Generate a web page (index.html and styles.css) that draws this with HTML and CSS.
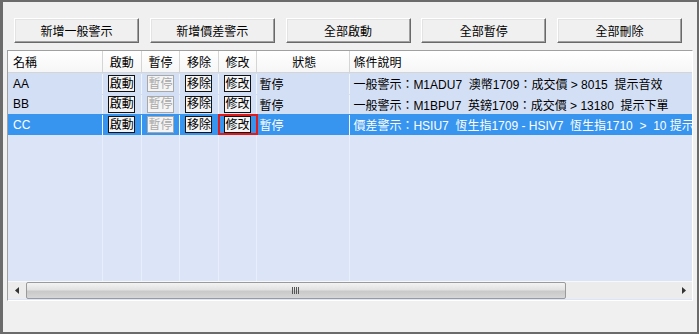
FILE: index.html
```html
<!DOCTYPE html>
<html>
<head>
<meta charset="utf-8">
<link rel="stylesheet" href="styles.css">
</head>
<body>
<div class="window">
  <div class="toolbar">
    <button class="btn">新增一般警示</button>
    <button class="btn">新增價差警示</button>
    <button class="btn">全部啟動</button>
    <button class="btn">全部暫停</button>
    <button class="btn">全部刪除</button>
  </div>
  <div class="list">
    <div class="row head">
      <div class="c c-name">名稱</div>
      <div class="c c-b ctr">啟動</div>
      <div class="c c-b ctr">暫停</div>
      <div class="c c-b ctr">移除</div>
      <div class="c c-b ctr">修改</div>
      <div class="c c-st ctr">狀態</div>
      <div class="c c-desc">條件說明</div>
    </div>
    <div class="row item">
      <div class="c c-name">AA</div>
      <div class="c c-b ctr"><span class="cb">啟動</span></div>
      <div class="c c-b ctr"><span class="cb off">暫停</span></div>
      <div class="c c-b ctr"><span class="cb">移除</span></div>
      <div class="c c-b ctr"><span class="cb">修改</span></div>
      <div class="c c-st">暫停</div>
      <div class="c c-desc">一般警示：M1ADU7&nbsp; 澳幣1709：成交價 &gt; 8015&nbsp; 提示音效</div>
    </div>
    <div class="row item">
      <div class="c c-name">BB</div>
      <div class="c c-b ctr"><span class="cb">啟動</span></div>
      <div class="c c-b ctr"><span class="cb off">暫停</span></div>
      <div class="c c-b ctr"><span class="cb">移除</span></div>
      <div class="c c-b ctr"><span class="cb">修改</span></div>
      <div class="c c-st">暫停</div>
      <div class="c c-desc">一般警示：M1BPU7&nbsp; 英鎊1709：成交價 &gt; 13180&nbsp; 提示下單</div>
    </div>
    <div class="row item sel">
      <div class="c c-name">CC</div>
      <div class="c c-b ctr"><span class="cb">啟動</span></div>
      <div class="c c-b ctr"><span class="cb off">暫停</span></div>
      <div class="c c-b ctr"><span class="cb">移除</span></div>
      <div class="c c-b ctr mark"><span class="cb">修改</span><span class="redbox"></span></div>
      <div class="c c-st">暫停</div>
      <div class="c c-desc">價差警示：HSIU7&nbsp; 恆生指1709 - HSIV7&nbsp; 恆生指1710&nbsp; &gt;&nbsp; 10 提示音效</div>
    </div>
    <div class="row empty">
      <div class="c c-name"></div>
      <div class="c c-b"></div>
      <div class="c c-b"></div>
      <div class="c c-b"></div>
      <div class="c c-b"></div>
      <div class="c c-st"></div>
      <div class="c c-desc"></div>
    </div>
    <div class="hscroll">
      <div class="arrow">
        <svg width="5" height="7" viewBox="0 0 5 7"><path d="M4 0 L0 3.5 L4 7 Z" fill="#333"/></svg>
      </div>
      <div class="thumb">
        <svg width="9" height="7" viewBox="0 0 9 7"><g fill="#555"><rect x="0" y="0" width="1" height="7"/><rect x="2" y="0" width="1" height="7"/><rect x="4" y="0" width="1" height="7"/><rect x="6" y="0" width="1" height="7"/></g></svg>
      </div>
      <div class="track"></div>
      <div class="arrow">
        <svg width="5" height="7" viewBox="0 0 5 7"><path d="M1 0 L5 3.5 L1 7 Z" fill="#333"/></svg>
      </div>
    </div>
  </div>
</div>
</body>
</html>
```
FILE: styles.css
```css
html, body {
  margin: 0;
  padding: 0;
  background: #f0f0f0;
}
.window {
  width: 699px;
  height: 334px;
  box-sizing: border-box;
  border: 2px solid #6b6b6b;
  border-left-width: 3px;
  background: #f0f0f0;
  display: flex;
  flex-direction: column;
  font-family: "Liberation Sans", "Noto Sans CJK TC", sans-serif;
  font-size: 12px;
  color: #000;
}
.toolbar {
  display: flex;
  gap: 10.75px;
  padding: 16px 0 0 11px;
  height: 25px;
}
.btn {
  width: 125px;
  height: 25px;
  margin: 0;
  padding: 0;
  background: #f0f0f0;
  border: 1px solid;
  border-color: #ffffff #696969 #696969 #ffffff;
  box-shadow: inset -1px -1px 0 #a0a0a0, inset 1px 1px 0 #e3e3e3;
  font-family: "Liberation Sans", "Noto Sans CJK TC", sans-serif;
  font-size: 12px;
  color: #000;
}
.list {
  margin: 7px 0 0 4px;
  width: 686px;
  height: 251px;
  box-sizing: border-box;
  border: 1px solid #a0a0a0;
  border-color: #a0a0a0 #ffffff #ffffff #a0a0a0;
  background: #dbe5f7;
  display: flex;
  flex-direction: column;
  overflow: hidden;
}
.row {
  display: flex;
  flex: none;
  height: 20px;
}
.c {
  box-sizing: border-box;
  border-right: 1px solid #eef3fc;
  display: flex;
  align-items: center;
  white-space: nowrap;
  overflow: hidden;
  flex: none;
}
.ctr { justify-content: center; }
.c-name { width: 95px; padding-left: 5px; }
.c-b { width: 38.6px; }
.c-st { width: 93px; padding-left: 2px; }
.c-desc { width: 342px; padding-left: 3px; border-right: none; }
.head {
  height: 21px;
  background: linear-gradient(#ffffff, #f6f6f6);
  border-bottom: 1px solid #d5d5d5;
}
.head .c { border-right: 1px solid #d5d5d5; }
.head .c-desc { border-right: none; }
.item { height: 20.5px; background: #d3dff5; padding-top: 1px; box-sizing: border-box; }
.item.sel { background: #3795f0; color: #fff; }
.empty { flex: 1; background: #dbe5f7; }
.empty .c { border-right-color: #e8eefa; }
.cb {
  display: inline-flex;
  align-items: center;
  justify-content: center;
  box-sizing: border-box;
  width: 27px;
  height: 17px;
  border: 1px solid #111;
  background: #f4f4f4;
  color: #000;
  font-size: 12px;
  line-height: 1;
}
.cb.off {
  border-color: #a8a8a8;
  color: #a8a8a8;
}
.mark { position: relative; overflow: visible; }
.redbox {
  position: absolute;
  left: -1px;
  top: -1px;
  width: 40px;
  height: 21px;
  box-sizing: border-box;
  border: 2px solid #e01a1a;
}
.hscroll {
  flex: none;
  height: 17px;
  display: flex;
  background: #ebebeb;
  border-top: 1px solid #f8f8f8;
  margin-bottom: 1px;
}
.arrow {
  width: 18px;
  display: flex;
  align-items: center;
  justify-content: center;
  background: #ececec;
}
.thumb {
  width: 540px;
  box-sizing: border-box;
  border: 1px solid #9a9a9a;
  border-radius: 2px;
  background: linear-gradient(#f3f3f3, #e2e2e2 45%, #c9c9c9 55%, #d6d6d6);
  display: flex;
  align-items: center;
  justify-content: center;
}
.track {
  flex: 1;
  background: #ececec;
}
```
